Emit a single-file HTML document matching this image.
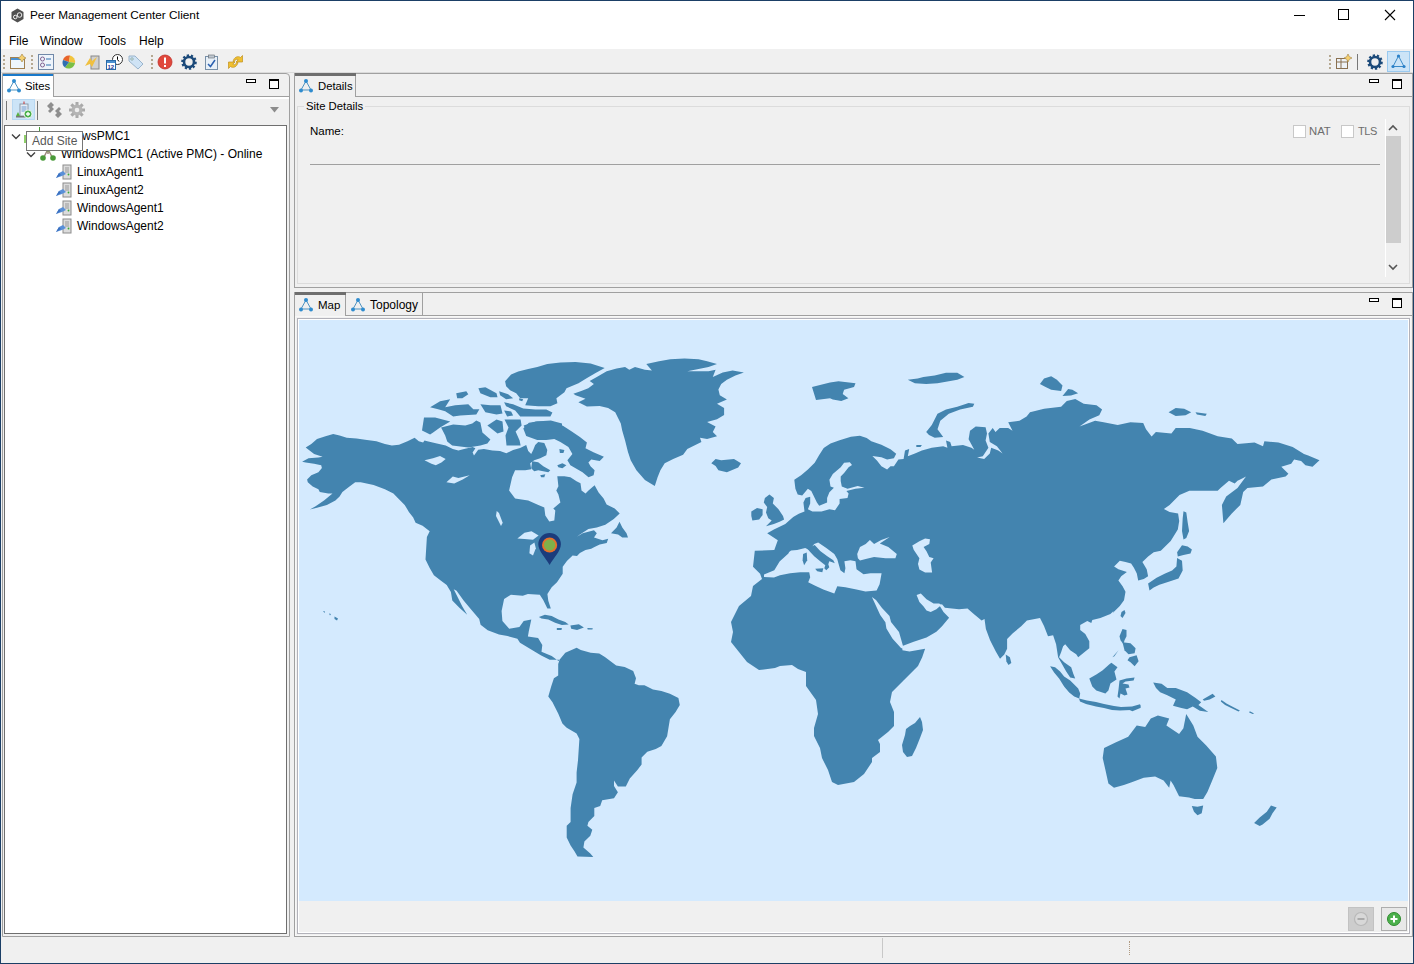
<!DOCTYPE html>
<html><head><meta charset="utf-8">
<style>
*{margin:0;padding:0;box-sizing:border-box}
html,body{width:1414px;height:964px;overflow:hidden;background:#f0f0f0;font-family:"Liberation Sans",sans-serif;font-size:12px;color:#000}
.a{position:absolute}
.t{position:absolute;white-space:nowrap;line-height:14px}
</style></head><body>
<!-- window frame -->
<div class="a" style="left:0;top:0;width:1414px;height:964px;border:1px solid #1b3f66"></div>
<!-- title + menu white -->
<div class="a" style="left:1px;top:1px;width:1412px;height:48px;background:#fff"></div>
<svg class="a" style="left:10px;top:8px" width="15" height="15" viewBox="0 0 15 15"><polygon points="7.5,0.5 13.5,4 13.5,11 7.5,14.5 1.5,11 1.5,4" fill="#505050"/><circle cx="5.3" cy="9" r="1.8" fill="none" stroke="#fff" stroke-width="0.9"/><circle cx="9.5" cy="7" r="2.3" fill="none" stroke="#fff" stroke-width="0.9"/></svg>
<div class="t" style="left:30px;top:8px;font-size:11.8px">Peer Management Center Client</div>
<div class="a" style="left:1294px;top:15px;width:11px;height:1px;background:#000"></div>
<div class="a" style="left:1338px;top:9px;width:11px;height:11px;border:1px solid #000"></div>
<svg class="a" style="left:1384px;top:9px" width="12" height="12" viewBox="0 0 12 12"><path d="M1,1 L11,11 M11,1 L1,11" stroke="#000" stroke-width="1.1"/></svg>
<div class="t" style="left:9px;top:34px">File</div>
<div class="t" style="left:40px;top:34px">Window</div>
<div class="t" style="left:98px;top:34px">Tools</div>
<div class="t" style="left:139px;top:34px">Help</div>
<!-- toolbar -->
<div class="a" style="left:1px;top:72px;width:1412px;height:1px;background:#dadada"></div>
<div class="a" style="left:3px;top:55px;width:2px;height:14px;border-left:2px dotted #b5a891"></div>
<svg class="a" style="left:10px;top:54px" width="16" height="16" viewBox="0 0 16 16"><rect x="0.5" y="3.5" width="14" height="11" fill="#eef6fc" stroke="#a08050"/><rect x="1" y="4" width="13" height="2" fill="#4a90d0"/><path d="M12,0 L13.5,2.5 L16,4 L13.5,5.5 L12,8 L10.5,5.5 L8,4 L10.5,2.5Z" fill="#f5d070" stroke="#a08040" stroke-width="0.6"/></svg>
<div class="a" style="left:31px;top:55px;width:2px;height:14px;border-left:2px dotted #b5a891"></div>
<svg class="a" style="left:38px;top:54px" width="16" height="16" viewBox="0 0 16 16"><rect x="0.5" y="0.5" width="15" height="15" fill="#eef4fb" stroke="#7088a8"/><circle cx="4.5" cy="5" r="2" fill="none" stroke="#806090"/><circle cx="4.5" cy="11" r="2" fill="none" stroke="#806090"/><path d="M8,5 H13 M8,11 H13" stroke="#3070b0"/></svg>
<svg class="a" style="left:61px;top:54px" width="16" height="16" viewBox="0 0 16 16"><path d="M8,8 L2,6 A6.5,6.5 0 0 1 9,1.5Z" fill="#e8642a"/><path d="M8,8 L9,1.5 A6.5,6.5 0 0 1 14,9Z" fill="#f2c43c"/><path d="M8,8 L14,9 A6.5,6.5 0 0 1 4,13.5Z" fill="#7bbf45"/><path d="M8,8 L4,13.5 A6.5,6.5 0 0 1 2,6Z" fill="#2f6fb0"/></svg>
<svg class="a" style="left:83px;top:54px" width="17" height="16" viewBox="0 0 17 16"><rect x="8" y="2" width="8" height="13" fill="#d0d0d0" stroke="#888"/><path d="M2,12 L7,4 L9,7 L14,3 L9,13 L7,10Z" fill="#f0c040"/></svg>
<svg class="a" style="left:106px;top:54px" width="17" height="16" viewBox="0 0 17 16"><circle cx="11.5" cy="5.5" r="5" fill="#fff" stroke="#333"/><path d="M11.5,2.5 V5.5 L13,7.5" stroke="#000" fill="none"/><rect x="0.5" y="6.5" width="9" height="9" fill="#fff" stroke="#2a6aa8"/><rect x="1" y="7" width="8" height="2" fill="#4a90d0"/><text x="1.5" y="14.5" font-size="6" font-weight="bold" fill="#1a3a9a" font-family="Liberation Sans">12</text></svg>
<svg class="a" style="left:128px;top:54px" width="16" height="16" viewBox="0 0 16 16"><path d="M1,2 H7 L15,10 L10,15 L1,7Z" fill="#cfe3f5" stroke="#9ab4cc"/><circle cx="4" cy="5" r="1.2" fill="#fff" stroke="#8aa"/></svg>
<div class="a" style="left:151px;top:55px;width:2px;height:14px;border-left:2px dotted #b5a891"></div>
<svg class="a" style="left:157px;top:54px" width="16" height="16" viewBox="0 0 16 16"><circle cx="8" cy="8" r="7" fill="#e0483c" stroke="#c0302a" stroke-width="0.8"/><rect x="7" y="3.5" width="2" height="6" fill="#fff"/><rect x="7" y="11" width="2" height="2" fill="#fff"/></svg>
<svg class="a" style="left:181px;top:54px" width="16" height="16" viewBox="0 0 16 16"><circle cx="8" cy="8" r="5" fill="none" stroke="#1c4a7a" stroke-width="2.6"/><circle cx="8" cy="8" r="6.6" fill="none" stroke="#1c4a7a" stroke-width="2.4" stroke-dasharray="2.2 1.9"/></svg>
<svg class="a" style="left:204px;top:54px" width="15" height="16" viewBox="0 0 15 16"><rect x="1.5" y="2.5" width="12" height="13" fill="#e8f0f8" stroke="#7890a8"/><rect x="4.5" y="1" width="6" height="3" fill="#c0c8d0" stroke="#606870" stroke-width="0.6"/><path d="M4,10 L6.5,12.5 L11,6" fill="none" stroke="#2a60b0" stroke-width="1.5"/></svg>
<svg class="a" style="left:227px;top:54px" width="17" height="16" viewBox="0 0 17 16"><path d="M6,7.5 C7,3 11,1.5 13.5,3.5 L15.5,1.5 L15.5,8 L9,8 L11.2,5.8 C9.8,4.6 8,5.2 7.5,7.5 Z" fill="#f0c030" stroke="#c09020" stroke-width="0.7"/><path d="M11,8.5 C10,13 6,14.5 3.5,12.5 L1.5,14.5 L1.5,8 L8,8 L5.8,10.2 C7.2,11.4 9,10.8 9.5,8.5 Z" fill="#f0c030" stroke="#c09020" stroke-width="0.7"/></svg>
<div class="a" style="left:1329px;top:55px;width:2px;height:14px;border-left:2px dotted #b5a891"></div>
<svg class="a" style="left:1336px;top:54px" width="16" height="16" viewBox="0 0 16 16"><rect x="0.5" y="4.5" width="11" height="10" fill="#eef2f6" stroke="#8a7050"/><path d="M0.5,8 H11.5 M5,4.5 V14.5" stroke="#8a7050"/><path d="M12,0 L13.3,2.7 L16,4 L13.3,5.3 L12,8 L10.7,5.3 L8,4 L10.7,2.7Z" fill="#f5d070" stroke="#a08040" stroke-width="0.6"/></svg>
<div class="a" style="left:1357px;top:54px;width:1px;height:16px;background:#777"></div>
<svg class="a" style="left:1367px;top:54px" width="16" height="16" viewBox="0 0 16 16"><circle cx="8" cy="8" r="5" fill="none" stroke="#1c4a7a" stroke-width="2.6"/><circle cx="8" cy="8" r="6.6" fill="none" stroke="#1c4a7a" stroke-width="2.4" stroke-dasharray="2.2 1.9"/></svg>
<div class="a" style="left:1387px;top:51px;width:23px;height:21px;background:#cce4f7;border:1px solid #99c9ef"></div>
<svg class="a" style="left:1390px;top:53px" width="17" height="17" viewBox="0 0 17 17"><path d="M8.5,3 L3,13.5 L14,13.5 Z" fill="none" stroke="#3a8ac8" stroke-width="1"/><circle cx="8.5" cy="3" r="1.6" fill="#2a80c8"/><circle cx="3" cy="13.5" r="1.6" fill="#2a80c8"/><circle cx="14" cy="13.5" r="1.6" fill="#2a80c8"/></svg>

<!-- left panel -->
<div class="a" style="left:2px;top:73px;width:288px;height:864px;border:1px solid #a0a0a0;border-radius:0 4px 0 0;background:#f0f0f0"></div>
<div class="a" style="left:3px;top:96px;width:286px;height:1px;background:#a0a0a0"></div>
<div class="a" style="left:3px;top:74px;width:51px;height:23px;background:#fff;border-right:1px solid #a0a0a0"></div>
<div class="a" style="left:3px;top:74px;width:50px;height:2px;background:#1979ca"></div>
<svg class="a" style="left:6px;top:78px" width="16" height="16" viewBox="0 0 16 16"><path d="M8,3 L3,12 L13,12 Z" fill="none" stroke="#4f93c0" stroke-width="1"/><circle cx="8" cy="3" r="2" fill="#2f8ccf"/><circle cx="3" cy="12.5" r="2" fill="#2f8ccf"/><circle cx="13" cy="12.5" r="2" fill="#2f8ccf"/></svg>
<div class="t" style="left:25px;top:79px;font-size:11.3px">Sites</div>
<div class="a" style="left:246px;top:79px;width:10px;height:4px;border:1px solid #000;background:#fff"></div>
<div class="a" style="left:269px;top:79px;width:10px;height:10px;border:1px solid #000;border-top-width:2px;background:#fff"></div>
<div class="a" style="left:3px;top:97px;width:286px;height:2px;background:#fff"></div>
<!-- sites toolbar -->
<div class="a" style="left:6px;top:101px;width:1px;height:19px;background:#777"></div>
<div class="a" style="left:12px;top:99px;width:23px;height:21px;background:#cce4f7;border:1px solid #b8d8f2"></div>
<svg class="a" style="left:15px;top:101px" width="18" height="18" viewBox="0 0 18 18"><rect x="5" y="3" width="8" height="12" fill="#e8eef6" stroke="#8a9aaa"/><path d="M6.5,6 H11.5 M6.5,8 H11.5 M6.5,10 H11.5" stroke="#6a9ad0"/><rect x="8.5" y="0.5" width="1" height="2.5" fill="#d03030"/><path d="M1,15 L3,11 L5,15Z" fill="#5ab040"/><rect x="1" y="15" width="11" height="1.5" fill="#777"/><circle cx="13" cy="13" r="4" fill="#4bb04b" stroke="#fff" stroke-width="0.8"/><path d="M11,13 H15 M13,11 V15" stroke="#fff" stroke-width="1.3"/></svg>
<div class="a" style="left:37px;top:101px;width:1px;height:19px;background:#777"></div>
<svg class="a" style="left:46px;top:101px" width="17" height="18" viewBox="0 0 17 18"><path d="M1,5 L5,1 L8,4 L6,6 L8,8 L4,12 L2,10 L4,8 Z" fill="#8e8e8e"/><path d="M16,13 L12,17 L9,14 L11,12 L9,10 L13,6 L15,8 L13,10 Z" fill="#8e8e8e"/></svg>
<svg class="a" style="left:68px;top:101px" width="18" height="18" viewBox="0 0 18 18"><g fill="#a9a9a9"><rect x="7.5" y="1" width="3" height="16"/><rect x="1" y="7.5" width="16" height="3"/><rect x="7.5" y="1" width="3" height="16" transform="rotate(45 9 9)"/><rect x="7.5" y="1" width="3" height="16" transform="rotate(-45 9 9)"/></g><circle cx="9" cy="9" r="5.5" fill="#b4b4b4"/><circle cx="9" cy="9" r="2.3" fill="#eeeeee"/></svg>
<svg class="a" style="left:270px;top:107px" width="9" height="6" viewBox="0 0 9 6"><polygon points="0,0 9,0 4.5,5.5" fill="#8c8c8c"/></svg>
<!-- tree -->
<div class="a" style="left:4px;top:125px;width:283px;height:809px;background:#fff;border:1px solid #6f6f6f"></div>
<svg class="a" style="left:11px;top:133px" width="10" height="8" viewBox="0 0 10 8"><path d="M1,1.5 L5,5.5 L9,1.5" fill="none" stroke="#404040" stroke-width="1.4"/></svg><div class="t" style="left:82px;top:129px">wsPMC1</div><svg class="a" style="left:26px;top:151px" width="10" height="8" viewBox="0 0 10 8"><path d="M1,1.5 L5,5.5 L9,1.5" fill="none" stroke="#404040" stroke-width="1.4"/></svg><svg class="a" style="left:39px;top:146px" width="18" height="16" viewBox="0 0 18 16"><path d="M9,3 L5,11 M9,3 L13,11 M9,8 V3" stroke="#9a8a7a" stroke-width="1.5"/><circle cx="9" cy="3" r="2.5" fill="#6ab04a"/><circle cx="4" cy="12" r="2.8" fill="#4a9a3a"/><circle cx="14" cy="12" r="2.8" fill="#4a9a3a"/></svg><div class="t" style="left:61px;top:147px">WindowsPMC1 (Active PMC) - Online</div><svg class="a" style="left:55px;top:164px" width="18" height="16" viewBox="0 0 18 16"><rect x="8" y="1" width="8" height="14" fill="#dcdcdc" stroke="#8c8c8c"/><path d="M10,4 H14 M10,6 H14 M10,8 H14" stroke="#999"/><circle cx="13.5" cy="10.5" r="0.9" fill="#3a3"/><path d="M1,14 L4,9 L8,7 L11,10 L7,12 Z" fill="#5a90d8"/><path d="M1,14 L4,9 L6,11Z" fill="#3a70c0"/></svg><div class="t" style="left:77px;top:165px">LinuxAgent1</div><svg class="a" style="left:55px;top:182px" width="18" height="16" viewBox="0 0 18 16"><rect x="8" y="1" width="8" height="14" fill="#dcdcdc" stroke="#8c8c8c"/><path d="M10,4 H14 M10,6 H14 M10,8 H14" stroke="#999"/><circle cx="13.5" cy="10.5" r="0.9" fill="#3a3"/><path d="M1,14 L4,9 L8,7 L11,10 L7,12 Z" fill="#5a90d8"/><path d="M1,14 L4,9 L6,11Z" fill="#3a70c0"/></svg><div class="t" style="left:77px;top:183px">LinuxAgent2</div><svg class="a" style="left:55px;top:200px" width="18" height="16" viewBox="0 0 18 16"><rect x="8" y="1" width="8" height="14" fill="#dcdcdc" stroke="#8c8c8c"/><path d="M10,4 H14 M10,6 H14 M10,8 H14" stroke="#999"/><circle cx="13.5" cy="10.5" r="0.9" fill="#3a3"/><path d="M1,14 L4,9 L8,7 L11,10 L7,12 Z" fill="#5a90d8"/><path d="M1,14 L4,9 L6,11Z" fill="#3a70c0"/></svg><div class="t" style="left:77px;top:201px">WindowsAgent1</div><svg class="a" style="left:55px;top:218px" width="18" height="16" viewBox="0 0 18 16"><rect x="8" y="1" width="8" height="14" fill="#dcdcdc" stroke="#8c8c8c"/><path d="M10,4 H14 M10,6 H14 M10,8 H14" stroke="#999"/><circle cx="13.5" cy="10.5" r="0.9" fill="#3a3"/><path d="M1,14 L4,9 L8,7 L11,10 L7,12 Z" fill="#5a90d8"/><path d="M1,14 L4,9 L6,11Z" fill="#3a70c0"/></svg><div class="t" style="left:77px;top:219px">WindowsAgent2</div>
<!-- right top panel -->
<div class="a" style="left:294px;top:73px;width:1119px;height:215px;border:1px solid #a0a0a0;background:#f0f0f0"></div>
<div class="a" style="left:295px;top:96px;width:1117px;height:1px;background:#a0a0a0"></div>
<div class="a" style="left:295px;top:74px;width:61px;height:23px;background:#f0f0f0;border-right:1px solid #a0a0a0"></div>
<div class="a" style="left:295px;top:73px;width:61px;height:3px;background:#6e6e6e"></div>
<svg class="a" style="left:298px;top:78px" width="16" height="16" viewBox="0 0 16 16"><path d="M8,3 L3,12 L13,12 Z" fill="none" stroke="#4f93c0" stroke-width="1"/><circle cx="8" cy="3" r="2" fill="#2f8ccf"/><circle cx="3" cy="12.5" r="2" fill="#2f8ccf"/><circle cx="13" cy="12.5" r="2" fill="#2f8ccf"/></svg>
<div class="t" style="left:318px;top:79px;font-size:11.3px">Details</div>
<div class="a" style="left:1369px;top:79px;width:10px;height:4px;border:1px solid #000;background:#fff"></div>
<div class="a" style="left:1392px;top:79px;width:10px;height:10px;border:1px solid #000;border-top-width:2px;background:#fff"></div>
<div class="a" style="left:297px;top:106px;width:1113px;height:178px;border:1px solid #dcdcdc"></div>
<div class="t" style="left:304px;top:99px;background:#f0f0f0;padding:0 2px;font-size:11.3px">Site Details</div>
<div class="t" style="left:310px;top:124px;font-size:11.5px">Name:</div>
<div class="a" style="left:1293px;top:125px;width:13px;height:13px;border:1px solid #c8c8c8;background:#fff"></div>
<div class="t" style="left:1309px;top:124px;color:#6d6d6d;font-size:11.3px">NAT</div>
<div class="a" style="left:1341px;top:125px;width:13px;height:13px;border:1px solid #c8c8c8;background:#fff"></div>
<div class="t" style="left:1358px;top:124px;color:#6d6d6d;font-size:11px;letter-spacing:-0.4px">TLS</div>
<div class="a" style="left:310px;top:164px;width:1070px;height:1px;background:#a0a0a0"></div>
<div class="a" style="left:1385px;top:119px;width:1px;height:158px;background:#fff"></div>
<div class="a" style="left:1386px;top:136px;width:15px;height:107px;background:#cdcdcd"></div>
<svg class="a" style="left:1388px;top:124px" width="10" height="7" viewBox="0 0 10 7"><path d="M1,6 L5,2 L9,6" fill="none" stroke="#555" stroke-width="1.6"/></svg>
<svg class="a" style="left:1388px;top:264px" width="10" height="7" viewBox="0 0 10 7"><path d="M1,1 L5,5 L9,1" fill="none" stroke="#555" stroke-width="1.6"/></svg>
<!-- right bottom panel -->
<div class="a" style="left:294px;top:292px;width:1119px;height:645px;border:1px solid #a0a0a0;background:#f0f0f0"></div>
<div class="a" style="left:295px;top:315px;width:1117px;height:1px;background:#a0a0a0"></div>
<div class="a" style="left:295px;top:293px;width:51px;height:23px;background:#f0f0f0;border-right:1px solid #a0a0a0"></div>
<div class="a" style="left:295px;top:292px;width:51px;height:3px;background:#6e6e6e"></div>
<div class="a" style="left:346px;top:293px;width:77px;height:23px;border-right:1px solid #a0a0a0"></div>
<svg class="a" style="left:298px;top:297px" width="16" height="16" viewBox="0 0 16 16"><path d="M8,3 L3,12 L13,12 Z" fill="none" stroke="#4f93c0" stroke-width="1"/><circle cx="8" cy="3" r="2" fill="#2f8ccf"/><circle cx="3" cy="12.5" r="2" fill="#2f8ccf"/><circle cx="13" cy="12.5" r="2" fill="#2f8ccf"/></svg>
<div class="t" style="left:318px;top:298px;font-size:11.5px">Map</div>
<svg class="a" style="left:350px;top:297px" width="16" height="16" viewBox="0 0 16 16"><path d="M8,3 L3,12 L13,12 Z" fill="none" stroke="#4f93c0" stroke-width="1"/><circle cx="8" cy="3" r="2" fill="#2f8ccf"/><circle cx="3" cy="12.5" r="2" fill="#2f8ccf"/><circle cx="13" cy="12.5" r="2" fill="#2f8ccf"/></svg>
<div class="t" style="left:370px;top:298px">Topology</div>
<div class="a" style="left:1369px;top:298px;width:10px;height:4px;border:1px solid #000;background:#fff"></div>
<div class="a" style="left:1392px;top:298px;width:10px;height:10px;border:1px solid #000;border-top-width:2px;background:#fff"></div>
<div class="a" style="left:295px;top:316px;width:1116px;height:620px;border:1px solid #f8f8f8"></div>
<div class="a" style="left:297px;top:318px;width:1113px;height:616px;border:1px solid #b2b2ba"></div>
<div class="a" style="left:298px;top:319px;width:1111px;height:614px;border:1px solid #fff"></div>
<svg class="a" style="left:299px;top:320px" width="1109" height="581" viewBox="0 0 1109 581">
<rect width="1109" height="581" fill="#d4eafe"/>
<g fill="#4384af">
<polygon points="6.7,127.6 12.3,124 18,119.1 26.5,116.3 34.2,114.1 40.6,115.6 47.7,117.7 57.6,118.4 66.1,119.8 77.4,121.2 85.9,124 92.9,125.5 100,124.8 108.5,121.2 115.6,117.7 119.8,121.2 124.1,122.6 125.5,120.5 128.3,121.2 136.8,123.3 146.7,125.5 153.8,129 159.4,130.4 165.1,129 173.6,126.9 176.4,128.3 173.6,132.5 175,135.4 179.2,129.7 184.9,129 193.4,130.4 201,131.1 207.3,133.2 214.1,130.1 221.1,128.1 227.2,125.1 229.2,131.1 232.2,134.1 234.2,130.1 236.2,125.1 239.2,122.1 245.3,123.1 248.3,130.1 247.3,135.2 241.2,138.2 235.2,140.2 231.2,143.2 232.2,149.2 226.2,150.2 216.1,150.2 213.1,157.3 210.1,170.4 216.1,178.4 229.2,180.4 238.2,184.4 245.3,187.5 246.3,195.5 250.3,201.5 255.3,200.5 256.3,190.5 254.3,188.5 261.4,182.4 259.4,174.4 257.3,170.4 259.4,166.3 258.3,156.3 265.4,156.3 271.4,157.3 277.5,161.3 281.5,163.3 282.5,170.4 286.5,173.4 289.5,170.4 295.6,165.3 299.6,172.4 304.6,178.4 307.6,184.4 315.7,188.5 320.7,193.5 314.8,199 306.3,204.7 297.8,207.5 289.4,208.9 280.9,214.6 278,216.7 283.7,213.2 295,210.3 297.8,213.2 295,217.4 303.5,220.2 309.2,218.8 307.7,223.1 300.7,224.5 295,227.3 292.2,228.7 286.5,230.1 280.9,233 278,236.1 273.6,235.4 267.9,241 263.7,246.7 263.7,253.7 258,262.2 252.7,267.2 248.4,274 249.3,280.7 251.8,288.4 248.4,288.4 244.2,279.9 240.8,274.8 228.9,274 223.8,275.7 211.9,274.8 205.1,279 202.6,290.9 203.4,301.1 210.2,308.8 220.4,307.1 224.7,301.1 232.3,299.4 229.8,311.3 228.9,316.4 239.1,318.1 243.3,324.9 242.5,331.7 252.7,335.9 259.5,341 266.3,332.7 277.6,327.8 281.8,329.9 291.7,332.7 300.2,333.4 305.9,337 317.2,345.5 325.7,346.9 334.2,351.1 337,358.2 335.6,363.8 339.8,365.3 345.5,365.3 354,369.5 362.4,370.9 370.9,373.7 379.4,378 380.8,385.1 376.6,392.1 370.9,399.2 369.5,407.7 368.1,416.2 362.4,426.1 356.8,428.9 348.3,431.7 342.6,437.4 342.6,444.5 338.4,450.1 330.8,458.5 326.8,466.4 318.9,466.4 315,460.5 315,466 318.9,472.3 315,478.2 303.2,480.2 301.2,486.1 295.3,488.1 295.3,496 289.4,501.9 288.4,505.8 293.3,509.8 291.3,515.7 285.4,521.6 284.4,527.5 291.3,533.4 294.3,537 278.5,536.4 275.6,531.4 271.6,525.5 267.7,517.6 267.7,505.8 271.6,501.9 271.6,488.1 273.6,474.3 277.6,462.5 277.6,452.6 279,440.2 280.4,419 277.6,413.4 267.7,407.7 263.4,403.5 259.2,393.6 253.5,382.2 249.3,376.6 252.1,366.7 254.9,358.2 259.2,355.4 259.2,344 260.6,339.8 250.7,339.8 242.2,335.6 235.1,331.3 221,322.8 218.4,318.8 208.5,316 200,314.6 188.7,310.3 181.6,304.7 180.2,299 171.7,289.1 164.6,280.6 157.6,270.7 154.7,269.3 157.6,275 163.2,286.3 168.2,294.8 160.4,287.7 153.3,280.6 151.9,272.1 147.7,265.1 142,260.8 134.9,255.2 130.7,248.1 126.5,239.6 127.2,228.3 127.9,217 130.7,211.3 123.6,205.7 116.6,202.8 114.2,197.6 109.9,191.9 105.7,184.9 100,179.2 94.4,173.6 85.9,169.3 74.6,165.1 61.8,162.2 56.2,162.2 50.5,166.5 43.4,172.1 40.6,176.4 36.4,180.6 27.9,184.9 18,187.7 10.9,189.4 16.6,186.3 25,180.6 33.5,173.6 29.3,173.6 20.8,172.1 19.4,169.3 13.7,166.5 8.8,162.2 8.1,159.4 12.3,155.2 19.4,152.3 22.9,148.1 22.2,145.3 15.1,143.8 6.7,142.4 3.1,141.7 9.5,138.2 19.4,137.5 23.6,136.8 15.1,133.9"/>
<polygon points="274.4,73.8 282.2,71 289.3,68.2 294.9,63.9 290.7,61.1 297.8,56.9 307.7,51.2 317.6,48.4 326.1,47 330.3,49.8 336,47 345.9,49.8 352.9,50.5 347.3,44.1 360,41.3 371.3,39.2 385.5,38.5 399.6,39.2 408.1,41.3 418,44.1 409.5,47 388.3,51.2 396.8,51.2 409.5,51.2 416.6,49.8 413.8,56.9 423.7,52.6 433.6,50.5 444.9,52.6 436.4,55.5 427.9,59.7 422.2,63.9 419.4,69.6 420.8,75.3 427.9,79.5 418,83.7 425.1,88 425.1,95.1 418,99.3 408.1,102.1 416.6,106.4 413.8,112 418,116.3 408.1,119.1 401,117.7 402.4,121.9 388.3,129 384.1,134.7 374.2,138.9 365.7,143.2 361.4,150.2 358.6,157.3 355.8,166.1 345.9,160.1 337.4,150.2 331.7,140.3 328.9,131.8 326.1,120.5 323.2,110.6 321.8,103.6 316.2,92.2 309.1,88 300.6,85.9 287.9,86.6 279.4,82.3 286.5,78.8 276.6,75.3"/>
<polygon points="412.3,143.2 416.6,138.9 422.2,140.3 435,138.9 442,143.2 439.2,147.4 427.9,152.3 419.4,150.2 416.6,146"/>
<polygon points="224.3,108.5 229.9,102.8 238.4,101.4 252.6,101.4 263.9,105.7 272.4,111.3 280.9,117 287.9,122.6 286.5,128.3 295,132.5 304.9,136.8 300.7,141 292.2,139.6 289.4,142.4 291.5,146.2 295.6,150.2 294.6,155.3 289.5,157.3 283.5,152.3 271.4,145.2 268.4,140.2 273.4,134.1 269.4,127.1 261.4,122.1 255.3,119.1 247.3,120.1 238.2,120.1 227.2,116"/>
<polygon points="233.2,141.2 239.2,142.2 244.3,146.2 251.3,150.2 249.3,152.3 239.2,150.2 235.2,151.2 232.2,148.2"/>
<polygon points="312,213.2 317.6,207.5 320.5,201.8 323.3,207.5 327.5,213.2 329,217.4 323.3,217.4 319.1,214.6"/>
<polygon points="125,97.4 136.1,97.4 151.2,101.4 141.1,107.4 134.1,112.5 131.1,114.5 123,110.5"/>
<polygon points="142.1,107.4 154.2,104.4 166.3,105.4 173.3,103.4 177.3,100.4 181.4,102.4 183.4,112.5 191.4,119.5 188.4,123.5 181.4,125.5 169.3,127.6 153.2,125.5 148.2,121.5 146.2,115.5"/>
<polygon points="131.1,87.3 141.1,81.3 151.2,79.3 146.2,87.3 156.2,85.3 169.3,84.3 174.3,89.3 180.4,89.3 177.3,94.4 161.2,95.4 154.2,96.4 146.2,91.3 139.1,89.3"/>
<polygon points="157.2,73.2 167.3,71.2 169.3,74.2 163.3,78.3 158.2,78.3"/>
<polygon points="181.4,84.3 191.4,85.3 201.5,85.3 203.5,93.4 197.5,94.4 186.4,92.3"/>
<polygon points="179.4,68.2 186.4,67.2 197.5,73.2 198.5,77.3 191.4,77.3 181.4,73.2"/>
<polygon points="200.1,71.2 209.1,74.3 214.1,78.3 207.1,79.3 201.1,75.3"/>
<polygon points="205.1,82.3 214.1,84.3 224.2,88.4 236.3,89.4 247.3,89.4 253.4,92.4 251.4,96.4 236.3,96.4 221.2,96.4 216.2,90.4 207.1,86.3"/>
<polygon points="206.1,61.2 212.1,54.6 219.2,51.6 229.2,49.1 238.3,47.1 248.3,44.1 261.4,42.6 276.5,42.1 291.6,43.6 305.7,48.1 296.6,53.1 287.6,58.2 279.5,63.2 267.5,68.2 265.4,72.3 257.4,78.3 258.4,83.3 251.4,86.3 239.3,86.3 226.2,85.3 229.2,78.3 221.2,78.3 217.2,73.3 211.1,70.2 207.1,66.2"/>
<polygon points="205.5,99.4 221.6,99.4 222.6,105.4 216.6,111.5 220.6,120.5 221.6,125.5 207.5,125.5 206.5,115.5 209.5,107.4"/>
<polygon points="188.4,105.4 197.5,99.4 203.5,101.4 204.5,111.5 198.5,113.5"/>
<polygon points="224.6,105.4 236.7,101.4 251.8,100.4 263,103.4 263,111.5 241.7,111.5 227.6,111.5"/>
<polygon points="239.9,296.9 245.9,294.7 252.7,296 259.5,299.4 266.3,302 269.7,304.5 262.9,304.9 256.1,302.8 249.3,299.4 242.5,298.6"/>
<polygon points="271.4,305.4 279.8,304.2 284.9,307.6 278.1,309.9 272.2,308.8"/>
<polygon points="257.8,307.9 262.9,307.9 262.5,310.1 257.8,309.9"/>
<polygon points="288.3,307.9 293.8,308.3 293.4,309.6 288.7,309.6"/>
<polygon points="461.1,253.8 454,246.7 455.8,230.8 475.3,230 478.8,220.2 468.2,213.2 474.9,209.6 486.3,203.9 494.2,197.1 499.8,193.7 505.5,191.5 504.4,182.4 506.6,177.9 511.2,176.8 511.2,183.6 508.9,189.2 513.4,191.5 522.5,191.5 530.4,189.2 536,190.3 540.6,183.6 540.6,179 548.5,177.9 549.6,173.4 547.4,171.1 556.4,168.8 565.5,167.7 558.7,166 548.5,168.8 542.8,166.6 541.7,160.9 541.7,156.4 545.1,153 549.6,147.3 553,145.1 550.8,142.2 545.1,142.8 541.7,147.3 533.8,154.1 530.4,159.8 531.5,166.6 534.9,167.7 530.4,172.2 528.1,177.9 528.1,182.4 520.2,185.8 517.9,182.4 512.3,171.1 508.9,168.8 503.2,175.6 498.7,174.5 496.4,168.8 495.3,159.8 502.1,155.3 508.9,149.6 515.7,142.8 520.2,134.9 524.7,128.1 531.5,123.6 540.6,120.2 551.9,116.8 560.9,115.7 567.7,117.9 572.3,121.3 582.4,124.7 591.5,129.2 597.2,133.8 594.9,138.3 588.1,139.4 582.4,137.2 573.4,136 577.9,140.6 582.4,146.2 588.1,149.6 591.5,146.2 594.9,146.2 599.4,139.4 604.6,139 606,130.5 610.2,129.1 608.8,136.2 615.9,133.4 622.9,130.5 632.8,127.7 644.2,126.3 648.4,127.7 647,120.6 651.2,122 652.6,126.3 664,124.9 672.4,127.7 675.3,129.8 669.6,119.2 671,110.7 676.7,106.5 686.6,107.2 688,113.6 686.6,120.6 689.4,127.7 683.8,136.2 678.1,137.6 685.2,139 690.8,133.4 692.2,127.7 699.3,130.5 703.6,133.4 697.9,126.3 690.8,122 689.4,113.6 693.7,107.9 696.5,112.1 700.7,107.9 709.2,107.9 713.5,110.7 709.2,102.2 720.5,100.8 727.6,96.6 731,92.3 745.1,88.8 762.1,86.7 767.8,81 776.3,78.9 784.7,83.8 797.5,85.3 803.1,89.5 800.3,95.2 790.4,99.4 780.5,106.5 796.1,100.8 804.6,102.2 818.7,105.1 831.4,102.2 844.2,102.9 847,109.3 852.6,116.4 856.9,112.1 872.4,113.6 876.7,107.9 890.8,107.9 903.6,110.7 918.7,116.3 932.8,118.4 938.5,124 955.5,122.6 964,126.2 965.4,121.2 979.5,122.6 993.7,126.9 1005,133.9 1009.2,135.4 1020.5,140.3 1013.5,146.7 1006.4,145.3 1002.1,141 995.1,139.6 992.2,143.8 982.3,146.7 989.4,153.7 986.6,156.6 972.4,159.4 964,166.5 948.4,167.9 944.2,172.1 941.3,184.9 932.8,193.4 924.4,203.3 922.9,184.9 927.2,176.4 938.5,167.9 947,156.6 944.2,158 938.5,160.8 935.7,163.6 930,160.8 921.5,167.9 918.7,170.7 911.6,170.7 890.4,170.7 880.5,175 870.6,184.9 864.9,189.1 870.6,191.9 879.1,193.4 880.2,201.1 878.8,209.6 871.7,220.9 861.8,230.8 854.7,232.2 849.1,236.5 843.4,242.1 847.7,249.2 849.1,256.3 844.8,259.1 839.2,260.5 837.8,253.5 834.9,247.8 832.1,243.6 826.5,242.1 820.8,240.7 815.1,246.4 819.4,249.2 827.9,252 822.2,256.3 819.4,260.5 823.6,266.2 826.5,271.8 825,280.3 820.8,286 813.7,293.1 814.6,290.9 811.4,294 801.4,298 793.3,300.1 792.3,303.1 788.3,301.1 781.2,305.1 781.2,310.1 786.3,314.1 790.3,321.2 790.3,328.2 785.3,332.3 779.2,337.3 777.2,334.3 771.2,330.2 766.2,324.2 764.1,326.2 762.1,332.3 760.1,337.3 765.1,342.3 772.2,347.3 774.2,353.4 776.2,358.4 771.2,357.4 767.2,351.4 763.1,344.3 759.1,337.3 757.1,324.2 754.1,315.2 749,316.2 745,306.1 741,298 727.9,300.5 722.2,306.2 713.8,313.3 708.1,318.9 708.1,328.8 705.3,334.5 701,338.7 696.8,331.6 691.1,320.3 686.9,309 685.5,299.1 682.6,300.5 678.4,297 674.2,293.5 668.5,288.5 660,289.2 645.9,287.8 643,284.3 640.2,285 644.5,292 650.1,297.7 643,306.2 637.4,311.8 627.5,317.5 614.7,321.7 603.4,326 603.4,330.2 610.5,331.6 617.6,330.2 626.1,328.8 623.2,337.3 619,346.1 605,360 593,372 591,382 595,392 595,406 589,412 579,420 581,424 581,432 573,438 573,442 565,454 555,462 539,465 533,462 529,450 523,438 521,428 515,416 515,408 519,394 517,380 507,366 507,352 499,349 493,345 481,346 476,348 460,350 448,342 440,332 432,322 434,312 432,302 440,286 452,276 454,266 463,259"/>
<polygon points="465.9,177.9 470.4,174.5 474.9,177.9 473.8,183.6 479.5,189.2 484,196 485.1,199.4 480.6,201.7 474.9,203.9 467,206.2 472.7,200.5 469.3,198.3 467,192.6 468.2,186.9 464.8,182.4"/>
<polygon points="452.3,191.5 458,188.1 463.6,189.2 463.6,194.9 460.2,199.4 453.4,200.5 452.3,196"/>
<polygon points="531,62.6 539.5,61.2 556.5,63.3 555,66.9 545.1,69.7 543.7,73.9 549.4,78.2 542.3,81 533.8,79.6 531,78.2 517,80 513,67"/>
<polygon points="608.8,59.8 618.7,58.4 624.4,57 635.7,55.6 647,52.7 658.3,52.7 665.4,57 658.3,59.8 649.8,61.2 638.5,63.3 627.2,64 615.9,63.3"/>
<polygon points="627.2,112.1 632.8,105.1 638.5,93.7 647,89.5 658.3,86.7 669.6,83.1 675.3,83.8 673.9,86.7 661.1,89.5 649.8,93.7 641.3,100.8 638.5,109.3 644.2,117.1 635.7,117.8 630,115"/>
<polygon points="617.3,124.9 622.9,124.9 621.5,127 617.3,127"/>
<polygon points="740.9,64 745.1,58.4 752.2,56.3 757.9,59.8 763.5,65.5 762.1,71.1 752.2,69.7 746.6,66.9"/>
<polygon points="763.5,76.1 769.2,69 773.4,69.7 779.1,73.2 772,75.4"/>
<polygon points="869.6,92.3 876.7,88.1 885.2,88.8 892.2,92.3 886.6,95.2 876.7,95.9"/>
<polygon points="896.5,92.3 907.8,93.7 906.4,95.9 897.9,94.5"/>
<polygon points="884.5,191.2 887.3,192.6 888.7,202.5 890.1,211 887.3,218.1 884.5,219.5 883,211 883.7,198.3"/>
<polygon points="883,225.2 888.7,226.6 892.9,229.4 891.5,233.6 884.5,235.1 878.8,236.5 878.1,232.2"/>
<polygon points="706.7,334.5 710.9,337.3 712.3,343 709.5,345.1 707.4,341.5"/>
<polygon points="621,397 623,402 624,410 621,418 617,428 613,436 608,437 604,432 603,425 606,415 607,409 611,406 616,403"/>
<polygon points="878.1,237.9 883,240.7 883.7,250.6 879.5,258.4 868.9,261.9 860.4,264.8 854.7,267.6 850.5,270.4 849.1,263.4 857.6,257.7 866.1,253.5 873.1,250.6 877.4,246.4"/>
<polygon points="822.5,292 825.5,290 826.5,293 823.5,298 821.5,296"/>
<polygon points="823.5,309.1 827.5,310.1 827.5,316.2 825.5,320.2 824.5,324.2 821.5,320.2 820.5,316.2"/>
<polygon points="830.5,337.3 837.6,335.3 839.6,341.3 835.6,346.3 831.5,342.3 828.5,340.3"/>
<polygon points="790.3,358.4 797.3,354.4 803.4,350.4 810.4,344.3 812.4,342.8 818.5,347.3 815.4,351.4 817.5,359.4 811.4,363.4 809.4,370.5 806.4,373.5 797.3,370.5 793.3,366.5"/>
<polygon points="751.1,346.3 756.1,347.3 761.1,351.4 765.1,356.4 771.2,360.4 775.2,364.4 779.2,368.5 781.2,373.5 780.2,378.5 775.2,376.5 770.2,372.5 765.1,366.5 760.1,358.4 755.1,352.4"/>
<polygon points="820.5,360.4 827.5,358.4 835.6,357.4 834.6,360.4 826.5,361.4 823.5,363.4 829.5,364.4 830.5,367.5 826.5,368.5 828.5,374.5 825.5,375.5 821.5,373.5 820.5,378.5 818.5,376.5 819.5,369.5"/>
<polygon points="780,378.5 788,380.5 797,382 805,384 815,386 822,387 833,386.4 841,384.2 842,386.4 832,390 821,390.6 813,390 805,388 797,386.6 787,384 781,381.5"/>
<polygon points="854.2,362.4 862.6,363.8 868.3,368.1 876.8,368.1 888.1,372.3 896.6,378 902.2,382.2 899.4,385.1 909.3,392.1 900.8,390.7 893.8,386.5 888.1,389.3 882.4,387.9 874,385.8 876.8,379.4 868.3,375.2 861.2,372.3 857,368.1"/>
<polygon points="805.1,428.1 816.5,422.4 829.2,416.8 837.7,405.5 846.2,406.9 851.8,398.4 858.9,395.6 870.2,398.4 867.4,405.5 880.1,413.9 884.4,408.3 887.2,394.1 894.3,405.5 898.5,416.8 907,425.3 916.9,436.6 918.3,447.9 912.6,462 908.4,471.9 904.2,479 895.7,479 890,477.6 880.1,476.2 874.5,464.9 871.6,460.6 870.2,467.7 864.6,460.6 856.1,456.4 844.7,457.8 833.4,462 824.9,464.9 815,467.7 809.4,463.5 806.6,450.7 803.7,438"/>
<polygon points="892.8,486.1 898.5,486.8 904.2,485.4 902.7,493.2 898.5,495.3 895,491.7"/>
<polygon points="955.1,503.1 960.7,497.4 967.8,491.7 972,485.4 977.7,487.5 973.5,493.2 970.6,498.8 963.6,504.5 960.7,505.9"/>
<polygon points="830.6,389.9 840.5,385.7 841.9,387.8 833.4,391.3"/>
<polygon points="823.5,322.2 831.5,323.2 836.6,328.2 835.6,333.3 829.5,334.3 825.5,330.2"/>
<polygon points="903.7,379.4 913.6,373.7 916.4,376.6 910.7,379.4 905.1,380.8"/>
<polygon points="813.4,337.3 819.5,330.2 815.4,336.3"/>
<polygon points="220.2,78.3 224.2,79.3 223.2,81.3 220.2,80.3"/>
<polygon points="205.1,90.4 212.1,91.4 214.1,95.4 208.1,96.4"/>
<polygon points="258.3,145.2 263.4,143.2 267.4,145.2 263.4,148.2 259.4,147.2"/>
<polygon points="260.4,129.1 265.4,130.1 264.4,133.1 260.9,133.1"/>
<polygon points="241.2,155.3 246.3,154.3 245.3,157.3 242.2,157.3"/>
<polygon points="24,291 26,291.5 25.5,293"/>
<polygon points="30,293.5 32,294 31,295.5"/>
<polygon points="35.5,296.5 39,298.5 38,300.5 35.5,299"/>
<polygon points="922.5,380 927.5,383.5 933.1,386.4 940.9,390.6 939.5,391.6 931.7,387.8 926.1,385 921.8,381.4"/>
<polygon points="950.8,391.3 955.1,393.4 953.7,394.1 950.1,392.4"/>
</g>
<g fill="#d4eafe">
<polygon points="125.5,140.3 134,138.2 141,136.1 146.7,138.9 142.4,142.4 136.8,145.3 132.5,143.8"/>
<polygon points="147.4,162.2 153.8,156.6 159.4,158 170.7,155.2 163.7,159.4 155.2,163.6"/>
<polygon points="218.4,218.4 225.5,212.7 232.5,211.3 239.6,215.6 234,219.8 225.5,219.1"/>
<polygon points="231.1,225.5 235.4,222.6 236.8,228.3 234,235.4 230.4,233.2"/>
<polygon points="465,254.5 475.3,250.3 480.6,241.4 489.4,233.5 490.1,232.1 492.1,230.6 498.1,230.1 506.2,228.1 510.2,230.1 515.2,224.1 519.2,222.6 527.3,228.1 535.3,234.1 538.3,239.2 539.4,243.2 541.4,250.2 545.4,253.3 546.4,248.2 545.4,241.2 551.4,240.2 556.5,241.2 557.5,249.2 564.5,254.3 571.5,253.3 582.6,253.3 580.6,264.3 577.6,270.4 566.5,271.4 557.5,269.4 546.4,267.3 538.3,266.3 535.3,273.4 524.3,269.4 515.2,265.3 509.2,262.3 511.2,257.3 510.2,252.3 501.1,252.3 491.1,253.3 481,255.3 475,257.5 465,257"/>
<polygon points="558.2,234 561,227 566.7,224.1 570.9,219.9 575.1,224.1 582.2,219.9 590.7,217.1 580.8,223.4 589.3,227 597.8,234 596.4,238.3 586.5,238.3 575.1,236.9 566.7,239 561,240.4 558.9,238.3"/>
<polygon points="613.3,225.6 620.4,221.3 626.1,218.5 631,219.2 630.3,224.1 624.6,227 627.5,231.2 630.3,236.9 634.6,238.3 631.7,242.5 633.1,252.4 626.1,252.4 620.4,249.6 619,243.9 620.4,238.3 614.7,229.8"/>
<polygon points="572.9,277 577,280 583,288 590.5,296 592,302 600,312 602,319 604,326 605,329 602,328 593.6,318.8 587.4,308.5 586.4,302.2 581.2,295"/>
<polygon points="617.6,275.1 621.8,273.6 627.5,279.3 634.6,283.6 640.2,283.6 642.3,285 637.4,289.2 631.7,292 627.5,290.6 624.6,286.4 620.4,282.1"/>
<polygon points="197.7,191 200,193 203.7,202.8 202,206 197,196"/>
</g>
<g fill="#4384af">
<polygon points="508.2,228.6 515.7,225.1 521.2,231.1 528.3,236.2 534.3,240.2 535.8,243.2 533.3,242.2 530.3,241.2 529.3,244.2 530.3,247.2 527.3,250.2 525.3,248.2 526.3,245.2 521.2,241.2 515.2,236.2 511.2,232.1"/>
<polygon points="516.2,248.7 524.3,248.2 523.3,252.3 518.2,251.2"/>
<polygon points="504.1,234.1 507.7,232.6 508.2,240.2 505.1,245.2 503.6,240.2"/>
</g>
<g transform="translate(250.6,213)"><path d="M0,32 C-4,25 -11.3,18 -11.3,11.3 A11.3,11.3 0 0 1 11.3,11.3 C11.3,18 4,25 0,32Z" fill="#1b3c7c"/><circle cx="0" cy="12" r="7.6" fill="#e8702a"/><circle cx="0" cy="12" r="5.7" fill="#7fb04a"/></g>
</svg>
<div class="a" style="left:1348px;top:907px;width:26px;height:24px;background:#cdcdcd;border:1px solid #c2c2c2"></div>
<svg class="a" style="left:1352px;top:910px" width="18" height="18" viewBox="0 0 18 18"><circle cx="9" cy="9" r="6.5" fill="#d8d8d8" stroke="#b8b8b8" stroke-width="1.2"/><rect x="5.5" y="8" width="7" height="2" fill="#aaa"/></svg>
<div class="a" style="left:1381px;top:907px;width:26px;height:24px;background:#e8e8e8;border:1px solid #adadad"></div>
<svg class="a" style="left:1385px;top:910px" width="18" height="18" viewBox="0 0 18 18"><circle cx="9" cy="9" r="6.5" fill="#4bb04b" stroke="#2e8a2e" stroke-width="1"/><rect x="5.5" y="8" width="7" height="2" fill="#fff"/><rect x="8" y="5.5" width="2" height="7" fill="#fff"/></svg>
<!-- status bar -->
<div class="a" style="left:882px;top:938px;width:1px;height:20px;background:#c8c8c8"></div>
<div class="a" style="left:1129px;top:941px;width:1px;height:14px;border-left:1px dotted #b09a80"></div>
<div class="a" style="left:0;top:963px;width:1414px;height:1px;background:#1b3f66"></div>
<div class="a" style="left:1413px;top:0;width:1px;height:964px;background:#1b3f66"></div>
<div class="a" style="left:0;top:0;width:1px;height:964px;background:#1b3f66"></div>
<div class="a" style="left:0;top:0;width:1414px;height:1px;background:#1b3f66"></div>
<div class="a" style="left:24px;top:135px;width:3px;height:8px;background:#8fcf6a"></div>
<div class="a" style="left:39px;top:127px;width:1px;height:4px;background:#4a9a3a"></div>
<!-- tooltip -->
<div class="a" style="left:26px;top:131px;width:57px;height:20px;background:#fff;border:1px solid #767676"></div>
<div class="t" style="left:32px;top:134px;color:#575757">Add Site</div>
</body></html>
